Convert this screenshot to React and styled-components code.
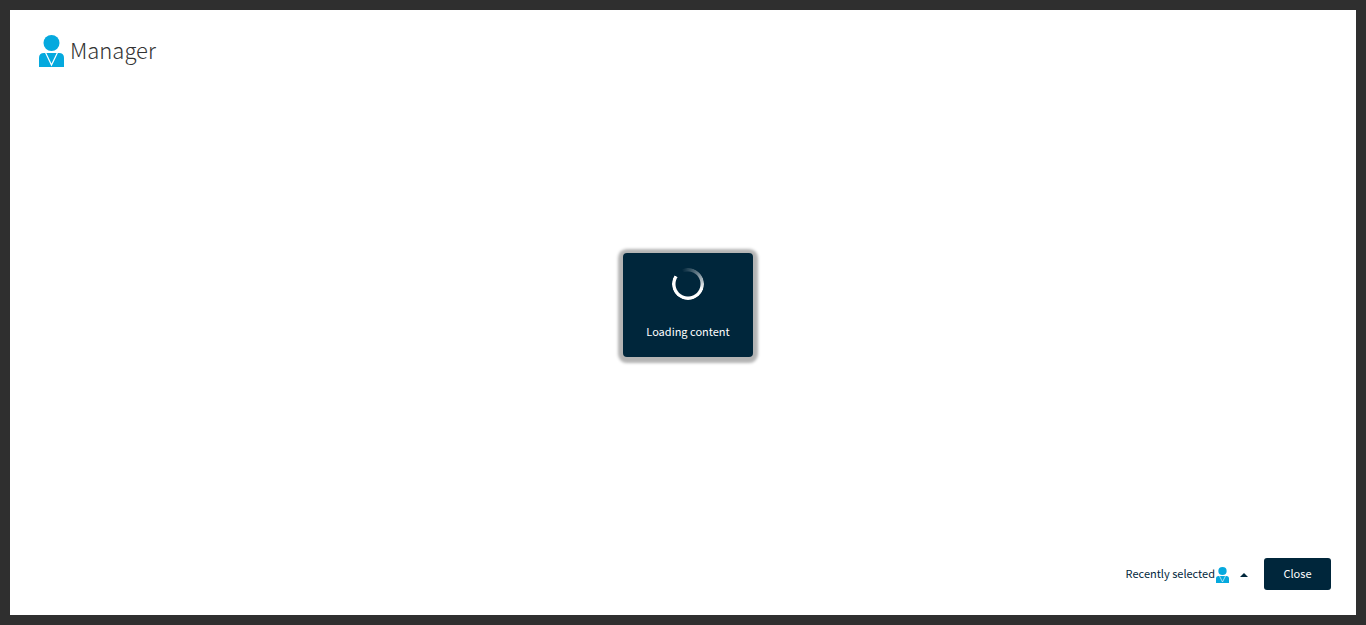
import React from "react";
import styled, { createGlobalStyle, keyframes } from "styled-components";

const NAVY = "#00263b";
const BLUE = "#05a9de";

const GlobalStyle = createGlobalStyle`
  *, *::before, *::after { box-sizing: border-box; }
  body {
    margin: 0;
    background: #2f2f2f;
    color: ${NAVY};
    font-family: "Noto Sans CJK SC", "Noto Sans", sans-serif;
    font-size: 11px;
    line-height: 16px;
  }
`;

const Frame = styled.div`
  display: flex;
  min-height: 100vh;
  padding: 10px;
`;

const Dialog = styled.section`
  flex: 1;
  display: flex;
  flex-direction: column;
  padding: 25px 25px 25px 29px;
  background: #fff;
`;

const Header = styled.header`
  display: flex;
  align-items: flex-start;
  gap: 6px;
`;

const Title = styled.h1`
  margin: 0;
  color: #333;
  font-size: 22px;
  font-weight: 300;
  line-height: 28px;
`;

const Content = styled.main`
  flex: 1;
  display: flex;
  align-items: center;
  justify-content: center;
  padding: 0 0 16px 6px;
`;

const LoadingBox = styled.div`
  display: flex;
  flex-direction: column;
  align-items: center;
  gap: 23px;
  min-width: 130px;
  padding: 15px 16px 18px;
  border-radius: 4px;
  background: ${NAVY};
  color: #fff;
  box-shadow: 0 1px 3px 5px #b4b4b4;
`;

const spin = keyframes`
  from { transform: rotate(0deg); }
  to { transform: rotate(360deg); }
`;

const Spinner = styled.div`
  width: 32px;
  height: 32px;
  border-radius: 50%;
  background: conic-gradient(
    from -24deg,
    rgba(255, 255, 255, 0) 0deg,
    rgba(255, 255, 255, 0.4) 65deg,
    #fff 135deg,
    #fff 326deg,
    rgba(255, 255, 255, 0) 328deg
  );
  mask: radial-gradient(circle, transparent 12px, #000 13px);
  animation: ${spin} 1s linear infinite paused;
`;

const Footer = styled.footer`
  display: flex;
  align-items: center;
  justify-content: flex-end;
  gap: 16px;
`;

const RecentButton = styled.button`
  display: flex;
  align-items: center;
  padding: 0;
  border: 0;
  background: none;
  color: ${NAVY};
  font: inherit;
  cursor: pointer;
`;

const RecentLabel = styled.span`
  padding-bottom: 2px;
`;

const RecentIcon = styled.span`
  display: flex;
  padding: 2px 11px 0 1px;
`;

const CloseButton = styled.button`
  width: 67px;
  height: 32px;
  padding: 0 0 2px;
  border: 0;
  border-radius: 3px;
  background: ${NAVY};
  color: #fff;
  font: inherit;
  cursor: pointer;
`;

function PersonIcon({ width, height }) {
  return (
    <svg width={width} height={height} viewBox="0 0 25 32" preserveAspectRatio="none" aria-hidden="true">
      <ellipse cx="12.5" cy="8" rx="8" ry="8" fill={BLUE} />
      <path d="M0 32V23Q0 18 5 18H20Q25 18 25 23V32Z" fill={BLUE} />
      <path d="M6.5 17.5L12.5 30L18.5 17.5" fill="none" stroke="#fff" strokeWidth="1.2" />
    </svg>
  );
}

function CaretUp() {
  return (
    <svg width="8" height="6" viewBox="0 0 8 6" aria-hidden="true">
      <path d="M0 6L4 2L8 6Z" fill={NAVY} />
    </svg>
  );
}

export default function App() {
  return (
    <>
      <GlobalStyle />
      <Frame>
        <Dialog>
          <Header>
            <PersonIcon width={25} height={32} />
            <Title>Manager</Title>
          </Header>
          <Content>
            <LoadingBox role="status">
              <Spinner />
              <span>Loading content</span>
            </LoadingBox>
          </Content>
          <Footer>
            <RecentButton type="button">
              <RecentLabel>Recently selected</RecentLabel>
              <RecentIcon>
                <PersonIcon width={13} height={16} />
              </RecentIcon>
              <CaretUp />
            </RecentButton>
            <CloseButton type="button">Close</CloseButton>
          </Footer>
        </Dialog>
      </Frame>
    </>
  );
}
